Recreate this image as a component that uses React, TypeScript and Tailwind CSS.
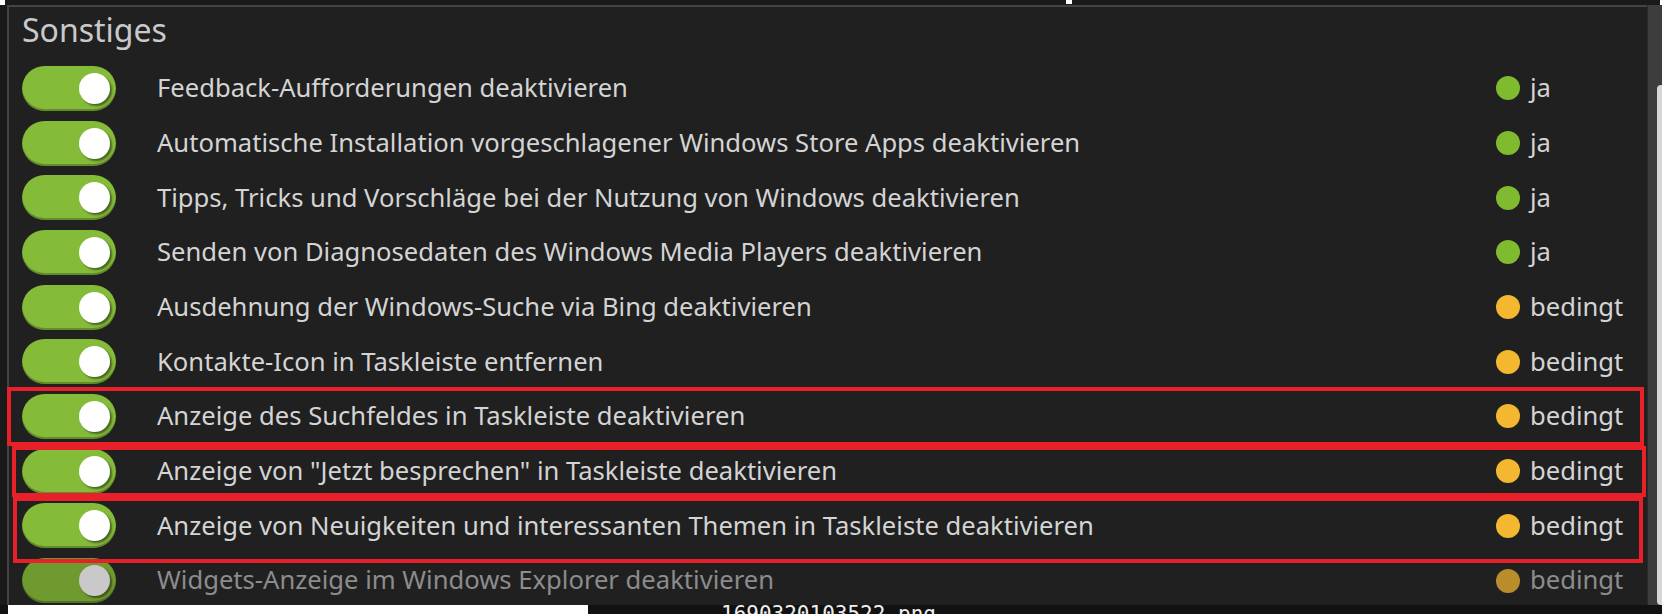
import React from 'react';

type Status = 'ja' | 'bedingt';

interface Setting {
  label: string;
  status: Status;
  dimmed?: boolean;
}

const settings: Setting[] = [
  { label: 'Feedback-Aufforderungen deaktivieren', status: 'ja' },
  { label: 'Automatische Installation vorgeschlagener Windows Store Apps deaktivieren', status: 'ja' },
  { label: 'Tipps, Tricks und Vorschläge bei der Nutzung von Windows deaktivieren', status: 'ja' },
  { label: 'Senden von Diagnosedaten des Windows Media Players deaktivieren', status: 'ja' },
  { label: 'Ausdehnung der Windows-Suche via Bing deaktivieren', status: 'bedingt' },
  { label: 'Kontakte-Icon in Taskleiste entfernen', status: 'bedingt' },
  { label: 'Anzeige des Suchfeldes in Taskleiste deaktivieren', status: 'bedingt' },
  { label: 'Anzeige von "Jetzt besprechen" in Taskleiste deaktivieren', status: 'bedingt' },
  { label: 'Anzeige von Neuigkeiten und interessanten Themen in Taskleiste deaktivieren', status: 'bedingt' },
  { label: 'Widgets-Anzeige im Windows Explorer deaktivieren', status: 'bedingt', dimmed: true },
];

const Toggle: React.FC<{ dimmed?: boolean }> = ({ dimmed }) => (
  <div
    className={`flex h-[45px] w-[94px] shrink-0 items-center justify-end rounded-full pr-[6px] shadow-[inset_0_-2px_0_rgba(0,0,0,0.25)] ${
      dimmed ? 'bg-[#6f9a2f]' : 'bg-[#84bb38]'
    }`}
  >
    <div
      className={`h-[31px] w-[31px] rounded-full shadow-[2px_2px_2px_rgba(0,0,0,0.45)] ${
        dimmed ? 'bg-[#c9c9c9]' : 'bg-white'
      }`}
    />
  </div>
);

const SettingRow: React.FC<{ setting: Setting }> = ({ setting }) => {
  const dot = setting.status === 'ja' ? 'bg-[#7fba2f]' : setting.dimmed ? 'bg-[#b98d2c]' : 'bg-[#f3b730]';
  const text = setting.dimmed ? 'text-[#8c8c8c]' : 'text-[#d4d4d4]';
  return (
    <div className="flex h-[54.7px] items-center">
      <div className="ml-[13px]">
        <Toggle dimmed={setting.dimmed} />
      </div>
      <div className={`ml-[41px] flex-1 truncate text-[25.6px] ${text}`}>{setting.label}</div>
      <div className="flex w-[151px] shrink-0 items-center gap-[10px]">
        <span className={`h-[24px] w-[24px] rounded-full ${dot}`} />
        <span className={`text-[25.6px] ${text}`}>{setting.status}</span>
      </div>
    </div>
  );
};

export default function App() {
  return (
    <div className="relative h-[614px] w-[1662px] overflow-hidden bg-[#1a1a1a] font-['Noto_Sans',sans-serif]">
      {/* top strip */}
      <div className="flex h-[5px]">
        <div className="h-[5px] w-[5px] bg-white" />
        <div className="ml-[1061px] h-[4px] w-[6px] bg-white" />
        <div className="flex-1" />
        <div className="h-[5px] w-[2px] bg-white" />
      </div>

      <div className="flex h-[600px]">
        <div className="w-[7px] shrink-0" />
        <div className="flex-1 border-l-2 border-t-2 border-[#434343] bg-[#202020]">
          <div className="ml-[13px] mt-[3px] text-[32px] leading-[40px] text-[#c9c9c9]">Sonstiges</div>
          <div className="mt-[11px]">
            {settings.map((s) => (
              <SettingRow key={s.label} setting={s} />
            ))}
          </div>
        </div>
        {/* scrollbar */}
        <div className="flex w-[15px] shrink-0 border-l border-[#2a2a2a] bg-[#3d3d3d]">
          <div className="ml-auto mt-[80px] h-[520px] w-[5px] rounded-l-[4px] bg-[#d6d6d6]" />
        </div>
      </div>

      {/* bottom strip */}
      <div className="flex h-[9px] bg-[#111]">
        <div className="ml-[8px] w-[580px] bg-white" />
        <div className="ml-[133px] -mt-[2px] font-['DejaVu_Sans_Mono',monospace] text-[21px] leading-[22px] text-[#eee]">
          1690320103522.png
        </div>
      </div>

      {/* annotation boxes */}
      <div className="pointer-events-none absolute left-[7px] top-[387px] h-[59px] w-[1637px] border-4 border-[#e8202a]" />
      <div className="pointer-events-none absolute left-[12px] top-[446px] h-[51px] w-[1634px] border-4 border-[#e8202a]" />
      <div className="pointer-events-none absolute left-[13px] top-[497px] h-[66px] w-[1630px] border-4 border-[#e8202a]" />
    </div>
  );
}
